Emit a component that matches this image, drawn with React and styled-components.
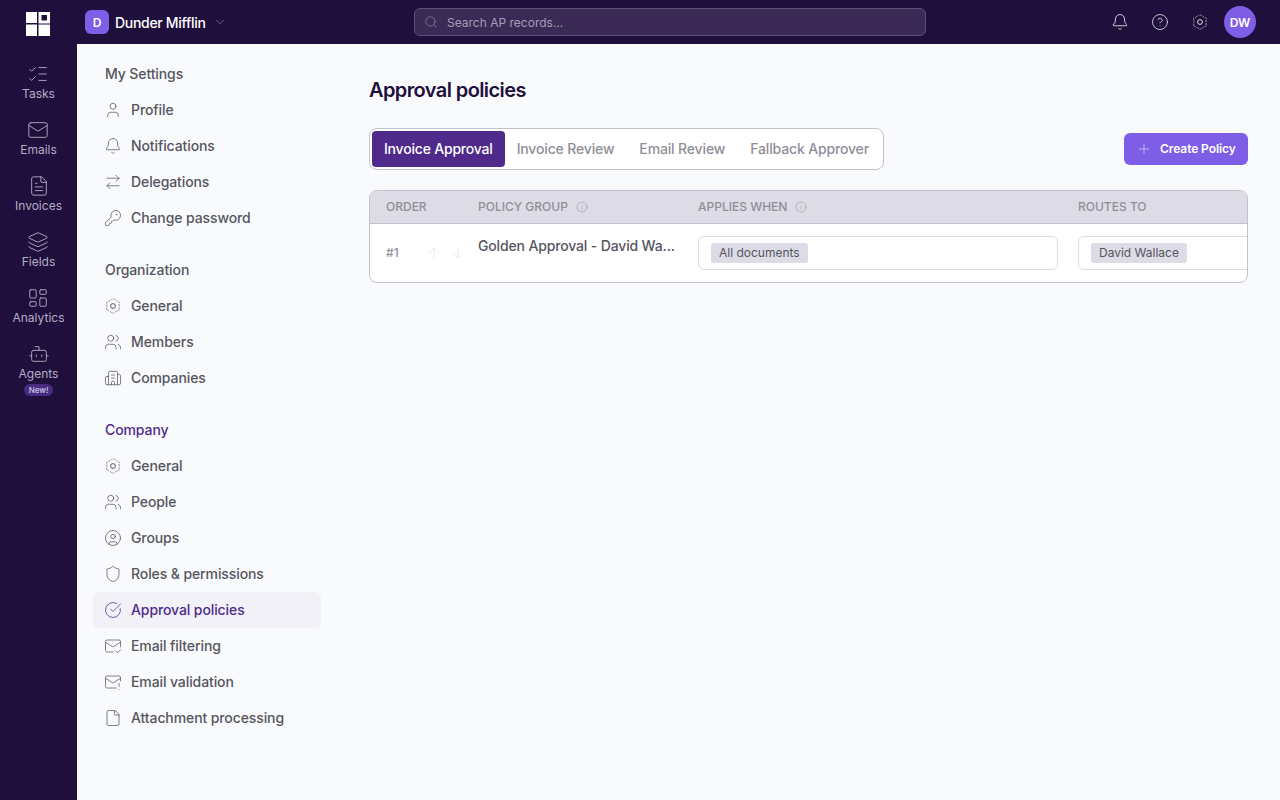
import React from "react";
import styled, { createGlobalStyle } from "styled-components";
import {
  ListChecks, Mail, FileText, Layers, LayoutDashboard, Bot, ChevronDown, Search, Bell, CircleHelp,
  User, ArrowRightLeft, KeyRound, Users, Building2, CircleUser, Shield, CircleCheckBig, MailCheck,
  MailWarning, File, Plus, Info, ArrowUp, ArrowDown,
} from "lucide-react";

const Global = createGlobalStyle`
  html, body { margin: 0; padding: 0; }
  body { font-family: Inter, "Liberation Sans", sans-serif; background: #f9fafc; -webkit-font-smoothing: antialiased; }
  * { box-sizing: border-box; }
`;

const Page = styled.div`
  height: 100vh;
  display: flex;
  flex-direction: column;
  overflow: hidden;
`;

const TopBar = styled.header`
  height: 44px;
  flex: none;
  display: flex;
  align-items: center;
  background: #1f0f3c;
  padding-right: 24px;
`;

const LogoBox = styled.div`
  width: 77px;
  flex: none;
  padding: 4px 0 0 26px;
  display: flex;
`;

const Brand = styled.div`
  width: 337px;
  flex: none;
  padding-left: 8px;
  display: flex;
  align-items: center;
  color: #fff;
  font-size: 14px;
  font-weight: 500;
  letter-spacing: -0.3px;
`;

const BrandMark = styled.div`
  width: 24px;
  height: 24px;
  border-radius: 6px;
  background: #7e5ee6;
  display: flex;
  align-items: center;
  justify-content: center;
  font-size: 12px;
  font-weight: 600;
  margin-right: 6px;
`;

const BrandChevron = styled(ChevronDown)`
  margin-left: 7px;
  color: #a79db8;
`;

const SearchBox = styled.div`
  width: 512px;
  height: 28px;
  flex: none;
  display: flex;
  align-items: center;
  gap: 9px;
  padding-left: 9px;
  background: #3a2a55;
  border: 1px solid #5d4f78;
  border-radius: 6px;
  color: #a79db8;
  font-size: 12px;
`;

const TopActions = styled.div`
  margin-left: auto;
  display: flex;
  align-items: center;
  gap: 22px;
  color: #e4e1ea;
`;

const Avatar = styled.div`
  width: 32px;
  height: 32px;
  border-radius: 50%;
  background: #7e5ee6;
  color: #fff;
  font-size: 12px;
  font-weight: 600;
  display: flex;
  align-items: center;
  justify-content: center;
  margin-left: -7px;
`;

const Body = styled.div`
  flex: 1;
  display: flex;
  min-height: 0;
`;

const Rail = styled.nav`
  width: 77px;
  flex: none;
  background: #1f0f3c;
  padding-top: 19px;
  display: flex;
  flex-direction: column;
  align-items: center;
  gap: 17px;
`;

const RailItem = styled.div`
  display: flex;
  flex-direction: column;
  align-items: center;
  height: 39px;
  color: #b5adc6;
  font-size: 12px;
  line-height: 16px;
  svg { flex: none; margin-bottom: 1px; }
`;

const NewBadge = styled.span`
  flex: none;
  margin-top: 2px;
  height: 12px;
  padding: 0 5px;
  border-radius: 6px;
  background: #472c82;
  color: #cfc6e6;
  font-size: 8px;
  font-weight: 500;
  line-height: 12px;
`;

const Sidebar = styled.aside`
  width: 260px;
  flex: none;
  padding: 12px 16px;
  display: flex;
  flex-direction: column;
  gap: 16px;
`;

const Group = styled.div`
  display: flex;
  flex-direction: column;
`;

const GroupTitle = styled.div`
  height: 36px;
  padding-left: 12px;
  display: flex;
  align-items: center;
  font-size: 14px;
  line-height: 20px;
  font-weight: 500;
  letter-spacing: -0.1px;
  color: ${(p) => (p.$active ? "#4f2a8a" : "#55555f")};
`;

const Item = styled.div`
  height: 36px;
  padding-left: 11px;
  display: flex;
  align-items: center;
  gap: 9px;
  border-radius: 6px;
  font-size: 14px;
  line-height: 20px;
  font-weight: 500;
  letter-spacing: -0.1px;
  color: ${(p) => (p.$active ? "#4f2a8a" : "#55555f")};
  background: ${(p) => (p.$active ? "#f2f1f8" : "transparent")};
`;

const Main = styled.main`
  flex: 1;
  min-width: 0;
  padding: 32px 32px 0;
`;

const Title = styled.h1`
  margin: 0 0 24px;
  font-size: 20px;
  line-height: 28px;
  font-weight: 600;
  letter-spacing: -0.6px;
  color: #1f0f3c;
`;

const TabRow = styled.div`
  display: flex;
  align-items: center;
  justify-content: space-between;
  margin-bottom: 20px;
`;

const Tabs = styled.div`
  display: flex;
  padding: 2px;
  background: #fff;
  border: 1px solid #c3c1cc;
  border-radius: 8px;
`;

const Tab = styled.div`
  height: 36px;
  padding: 0 12px;
  margin-right: ${(p) => (p.$active ? "0" : "1px")};
  display: flex;
  align-items: center;
  border-radius: 4px;
  font-size: 14px;
  line-height: 20px;
  font-weight: 500;
  letter-spacing: ${(p) => (p.$active ? "-0.2px" : "-0.15px")};
  background: ${(p) => (p.$active ? "#4f2a8a" : "transparent")};
  color: ${(p) => (p.$active ? "#fff" : "#8f8e98")};
  &:last-child { margin-right: 0; }
`;

const CreateButton = styled.button`
  width: 124px;
  height: 32px;
  padding: 0 0 0 12px;
  display: flex;
  align-items: center;
  gap: 8px;
  border: 0;
  border-radius: 6px;
  background: #7e5ee6;
  color: #fff;
  font-family: inherit;
  font-size: 12px;
  line-height: 16px;
  font-weight: 600;
  letter-spacing: -0.08px;
  svg { color: #d4c8f6; }
`;

const Table = styled.div`
  border: 1px solid #c3c1cc;
  border-radius: 8px;
  overflow: hidden;
  background: #fff;
`;

const Columns = styled.div`
  display: grid;
  grid-template-columns: 92px 220px 380px 360px;
  padding-left: 16px;
`;

const HeadRow = styled(Columns)`
  height: 33px;
  align-items: center;
  background: #dddbe5;
  border-bottom: 1px solid #c3c1cc;
`;

const HeadCell = styled.div`
  display: flex;
  align-items: center;
  gap: 8px;
  font-size: 12px;
  line-height: 16px;
  font-weight: 500;
  color: #8f8e98;
`;

const DataRow = styled(Columns)`
  height: 58px;
  padding-top: 12px;
`;

const OrderCell = styled.div`
  height: 34px;
  display: flex;
  align-items: center;
  font-size: 12px;
  line-height: 16px;
  font-weight: 500;
  color: #8f8e98;
`;

const Arrows = styled.span`
  display: flex;
  gap: 8px;
  margin-left: 27px;
  color: #dcdce1;
`;

const PolicyName = styled.div`
  font-size: 14px;
  line-height: 20px;
  font-weight: 500;
  letter-spacing: -0.15px;
  color: #55555f;
`;

const Field = styled.div`
  width: 360px;
  height: 34px;
  display: flex;
  align-items: center;
  padding-left: 12px;
  border: 1px solid #dddbe5;
  border-radius: 6px;
`;

const Tag = styled.span`
  height: 20px;
  padding: 0 8px;
  display: flex;
  align-items: center;
  border-radius: 3px;
  background: #dddbe5;
  color: #55555f;
  font-size: 12px;
  line-height: 16px;
`;

// six lobed gear, lucide's one has square teeth
function Gear({ size = 18 }) {
  return (
    <svg width={size} height={size} viewBox="0 0 24 24" fill="none" stroke="currentColor" strokeLinejoin="round">
      <path
        d="M12 2Q16 5.1 20.66 7Q19.5 12 20.66 17Q16 18.9 12 22Q8 18.9 3.34 17Q4.5 12 3.34 7Q8 5.1 12 2Z"
        strokeWidth="1"
        strokeDasharray="3 1"
        strokeOpacity=".8"
      />
      <circle cx="12" cy="12" r="3.2" strokeWidth="1.3" />
    </svg>
  );
}

const railItems = [
  ["Tasks", ListChecks],
  ["Emails", Mail],
  ["Invoices", FileText],
  ["Fields", Layers],
  ["Analytics", LayoutDashboard],
  ["Agents", Bot],
];

const groups = [
  { title: "My Settings", items: [["Profile", User], ["Notifications", Bell], ["Delegations", ArrowRightLeft], ["Change password", KeyRound]] },
  { title: "Organization", items: [["General", Gear], ["Members", Users], ["Companies", Building2]] },
  {
    title: "Company",
    active: true,
    items: [
      ["General", Gear], ["People", Users], ["Groups", CircleUser], ["Roles & permissions", Shield],
      ["Approval policies", CircleCheckBig], ["Email filtering", MailCheck], ["Email validation", MailWarning], ["Attachment processing", File],
    ],
  },
];

function Logo() {
  return (
    <svg width="24" height="24" viewBox="0 0 24 24">
      <rect x="0" y="0" width="11" height="11" fill="#fff" />
      <rect x="14" y="1.5" width="8.5" height="8.5" fill="none" stroke="#fff" strokeWidth="3" />
      <rect x="0" y="12.5" width="11" height="11.5" fill="#fff" />
      <rect x="12.5" y="12.5" width="11.5" height="11.5" fill="#fff" />
    </svg>
  );
}

export default function App() {
  return (
    <Page>
      <Global />
      <TopBar>
        <LogoBox><Logo /></LogoBox>
        <Brand>
          <BrandMark>D</BrandMark>
          Dunder Mifflin
          <BrandChevron size={14} strokeWidth={1} />
        </Brand>
        <SearchBox>
          <Search size={14} strokeWidth={1} />
          Search AP records...
        </SearchBox>
        <TopActions>
          <Bell size={18} strokeWidth={1.2} />
          <CircleHelp size={18} strokeWidth={1.1} />
          <Gear size={18} />
          <Avatar>DW</Avatar>
        </TopActions>
      </TopBar>
      <Body>
        <Rail>
          {railItems.map(([label, Icon]) => (
            <RailItem key={label}>
              <Icon size={22} strokeWidth={1} />
              {label}
              {label === "Agents" && <NewBadge>New!</NewBadge>}
            </RailItem>
          ))}
        </Rail>
        <Sidebar>
          {groups.map((g) => (
            <Group key={g.title}>
              <GroupTitle $active={g.active}>{g.title}</GroupTitle>
              {g.items.map(([label, Icon]) => (
                <Item key={label} $active={label === "Approval policies"}>
                  <Icon size={18} strokeWidth={1} />
                  {label}
                </Item>
              ))}
            </Group>
          ))}
        </Sidebar>
        <Main>
          <Title>Approval policies</Title>
          <TabRow>
            <Tabs>
              <Tab $active>Invoice Approval</Tab>
              <Tab>Invoice Review</Tab>
              <Tab>Email Review</Tab>
              <Tab>Fallback Approver</Tab>
            </Tabs>
            <CreateButton>
              <Plus size={16} strokeWidth={1.2} />
              Create Policy
            </CreateButton>
          </TabRow>
          <Table>
            <HeadRow>
              <HeadCell>ORDER</HeadCell>
              <HeadCell>POLICY GROUP <Info size={12} strokeWidth={1} /></HeadCell>
              <HeadCell>APPLIES WHEN <Info size={12} strokeWidth={1} /></HeadCell>
              <HeadCell>ROUTES TO</HeadCell>
            </HeadRow>
            <DataRow>
              <OrderCell>
                #1
                <Arrows>
                  <ArrowUp size={16} strokeWidth={1} />
                  <ArrowDown size={16} strokeWidth={1} />
                </Arrows>
              </OrderCell>
              <PolicyName>Golden Approval - David Wa...</PolicyName>
              <Field><Tag>All documents</Tag></Field>
              <Field><Tag>David Wallace</Tag></Field>
            </DataRow>
          </Table>
        </Main>
      </Body>
    </Page>
  );
}
